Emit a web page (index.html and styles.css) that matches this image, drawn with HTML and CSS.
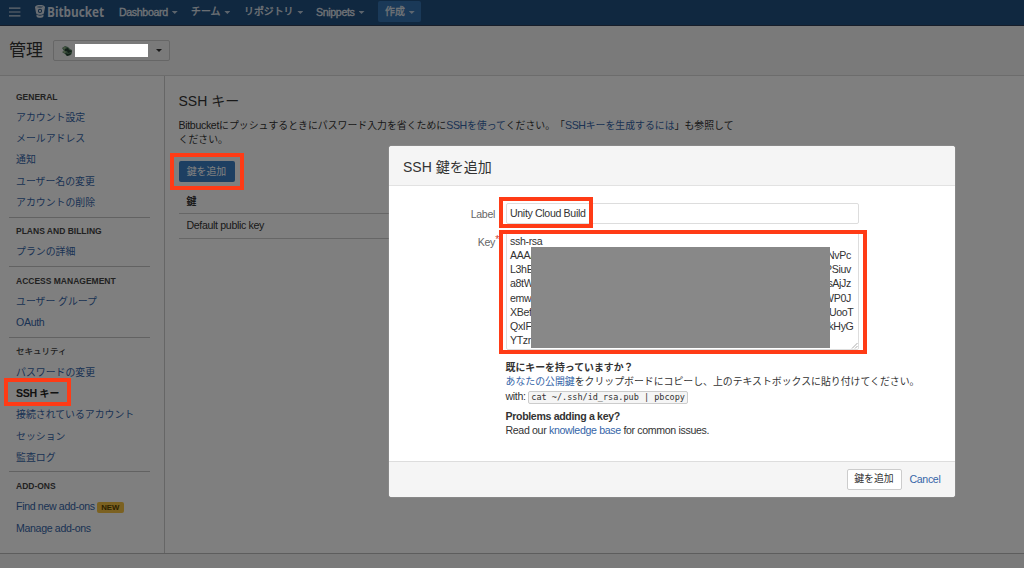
FILE: index.html
```html
<!DOCTYPE html>
<html lang="ja">
<head>
<meta charset="utf-8">
<title>SSH キー — Bitbucket</title>
<link rel="stylesheet" href="styles.css">
</head>
<body>
<div class="screen">
  <nav class="topbar">
    <svg class="menu-icon" viewBox="0 0 12 10"><path d="M0 1.2h11.4M0 5h11.4M0 8.8h11.4"/></svg>
    <svg class="logo" viewBox="0 0 76 22">
      <path class="logo-bucket" fill-rule="evenodd" d="M1 6.200C1 4.500 3.500 4 6 4s5 .5 5 2.200L9.900 12.200C9.300 13.300 7.800 13.800 6 13.800S2.700 13.300 2.100 12.200ZM2.600 6C3.300 6.600 8.700 6.600 9.400 6 8.700 5.300 3.300 5.300 2.600 6ZM6 7.800A2.100 2.100 0 1 0 6 12 2.100 2.100 0 1 0 6 7.800Z"/>
      <circle class="logo-bucket" cx="6" cy="9.900" r="1.100"/>
      <path class="logo-bucket" d="M2.300 13.500C4 15 8 15 9.700 13.500L9.300 15.700C8.300 17 3.700 17 2.700 15.700Z"/>
      <text x="13" y="16.300" textLength="57" lengthAdjust="spacingAndGlyphs">Bitbucket</text>
    </svg>
    <a class="nav-item nav-dashboard"><span class="latin">Dashboard</span><i class="caret"></i></a>
    <a class="nav-item nav-team">チーム<i class="caret"></i></a>
    <a class="nav-item nav-repo">リポジトリ<i class="caret"></i></a>
    <a class="nav-item nav-snippets"><span class="latin">Snippets</span><i class="caret"></i></a>
    <a class="nav-item nav-create">作成<i class="caret"></i></a>
  </nav>
  <header class="page-header">
    <h1>管理</h1>
    <div class="account">
      <svg class="avatar" viewBox="0 0 12 12"><path fill="#5f8969" d="M1 3 4 1l3 1 2 2 2 1v3l-1 2-4 1-2-2-3-2 2-1Z"/><path fill="#243f30" d="m4 4 3-1 1 2 3 1-1 1-3 1-1-2H4Zm0 4 3 1 3-1-1 2-3 1Z"/><path fill="#a4bd91" d="m2 3 2-1 1 1-2 1ZM3 6l2 1-1 1-2-1Z"/></svg>
      <span class="name-mask"></span>
      <i class="caret"></i>
    </div>
  </header>
  <div class="columns">
    <aside class="sidebar">
      <section><h2>GENERAL</h2><a>アカウント設定</a><a>メールアドレス</a><a>通知</a><a>ユーザー名の変更</a><a>アカウントの削除</a></section>
      <section><h2>PLANS AND BILLING</h2><a>プランの詳細</a></section>
      <section><h2>ACCESS MANAGEMENT</h2><a>ユーザー グループ</a><a class="latin">OAuth</a></section>
      <section><h2 class="heading-ja">セキュリティ</h2><a>パスワードの変更</a><a class="current"><span class="latin">SSH</span> キー</a><a>接続されているアカウント</a><a>セッション</a><a>監査ログ</a></section>
      <section><h2>ADD-ONS</h2><a><span class="latin">Find new add-ons</span><span class="badge">NEW</span></a><a class="latin">Manage add-ons</a></section>
    </aside>
    <main class="content">
      <h2 class="content-title">SSH キー</h2>
      <p class="intro"><span class="latin">Bitbucket</span>にプッシュするときにパスワード入力を省くために<a><span class="latin">SSH</span>を使って</a>ください。「<a><span class="latin">SSH</span>キーを生成するには</a>」も参照して<br>ください。</p>
      <button class="add-key">鍵を追加</button>
      <div class="key-table"><div class="key-head">鍵</div><div class="key-row latin">Default public key</div></div>
    </main>
  </div>
  <footer class="page-footer"></footer>
  <div class="blanket"></div>

  <div class="dialog">
    <div class="dialog-header">SSH 鍵を追加</div>
    <div class="dialog-body">
      <div class="field">
        <label class="latin">Label</label>
        <div class="input latin">Unity Cloud Build</div>
      </div>
      <div class="field">
        <label class="latin">Key<span class="required">*</span></label>
        <div class="textarea latin">
          <div class="line"><span>ssh-rsa</span></div>
          <div class="line"><span>AAAA</span><span>NvPc</span></div>
          <div class="line"><span>L3hE</span><span>PSiuv</span></div>
          <div class="line"><span>a8tW</span><span>sAjJz</span></div>
          <div class="line"><span>emw</span><span>WP0J</span></div>
          <div class="line wide"><span>XBef</span><span>UooT</span></div>
          <div class="line wide"><span>QxIF</span><span>kHyG</span></div>
          <div class="line"><span>YTzr</span></div>
          <div class="key-mask"></div>
          <svg class="grip" viewBox="0 0 7 7"><path d="M1 6.500 6.500 1M4 6.500 6.500 4"/></svg>
        </div>
      </div>
      <div class="help">
        <strong>既にキーを持っていますか？</strong>
        <p><a>あなたの公開鍵</a>をクリップボードにコピーし、上のテキストボックスに貼り付けてください。</p>
        <p class="command"><span class="latin">with:</span> <code>cat ~/.ssh/id_rsa.pub | pbcopy</code></p>
        <strong class="problems latin">Problems adding a key?</strong>
        <p class="latin">Read our <a>knowledge base</a> for common issues.</p>
      </div>
    </div>
    <div class="dialog-footer"><button class="submit">鍵を追加</button><a class="latin">Cancel</a></div>
  </div>

  <div class="mark mark-add"></div>
  <div class="mark mark-menu"></div>
  <div class="mark mark-label"></div>
  <div class="mark mark-key"></div>
</div>
</body>
</html>
```

FILE: styles.css
```css
* { box-sizing: border-box; }
body { margin: 0; }
h1, h2, p { margin: 0; font-weight: normal; }
button { font: inherit; padding: 0; }
.screen {
  position: relative;
  display: flex;
  flex-direction: column;
  width: 1024px;
  height: 568px;
  overflow: hidden;
  background: #fff;
  color: #333;
  font: 9.9px/14.1px "Liberation Sans", "Noto Sans CJK JP", sans-serif;
  text-spacing-trim: space-all;
  white-space: nowrap;
}
.latin { font-size: 10.600px; letter-spacing: -.34px; }
a { color: #3565a8; }

.caret { display: inline-block; flex: none; width: 6px; height: 3px; background: currentColor; clip-path: polygon(0 0, 100% 0, 50% 100%); }

.topbar { display: flex; align-items: center; height: 26px; flex: none; background: #205081; border-bottom: 1px solid #2e3d54; padding: 0 0 2px 9px; }
.menu-icon { width: 12px; height: 10px; fill: none; stroke: #ccd6e1; stroke-width: 1.2; }
.logo { width: 76px; height: 22px; margin-left: 13px; fill: #d5dde6; }
.logo text { font: bold 14px "Open Sans", sans-serif; }
.nav-item { display: flex; align-items: center; padding-top: 1px; color: #e0e6ed; -webkit-text-stroke: .3px #e0e6ed; }
.nav-item .caret { margin: 1px 0 0 4px; opacity: .8; }
.nav-dashboard { margin-left: 9px; width: 72px; }
.nav-team { width: 53px; }
.nav-repo { width: 72px; }
.nav-snippets { width: 62px; }
.nav-create { height: 21px; width: 43px; padding-left: 7px; background: #3572b0; border-radius: 2px; }

.page-header { display: flex; align-items: center; height: 50px; flex: none; padding: 0 0 0 9px; background: #f5f5f5; border-bottom: 1px solid #d8d8d8; }
.page-header h1 { width: 44px; font-size: 17px; line-height: 24px; }
.account { display: flex; align-items: center; width: 117px; height: 21px; padding-left: 7px; border: 1px solid #ccc; border-radius: 2px; }
.avatar { width: 12px; height: 12px; }
.name-mask { position: relative; z-index: 3; width: 73px; height: 13px; margin-left: 2px; background: #fff; }
.account .caret { margin-left: 8px; }

.columns { display: flex; height: 477px; flex: none; }
.sidebar { width: 165px; flex: none; padding: 10.500px 14px 0 9px; border-right: 1px solid #ccc; }
.sidebar section { padding: 0 7px 3.600px; border-bottom: 1px solid #c4c4c4; margin-bottom: 3.400px; }
.sidebar section:last-child { border: 0; }
.sidebar h2 { height: 20.500px; font-size: 8.500px; line-height: 21px; font-weight: bold; color: #444; }
.sidebar .heading-ja { font-weight: 500; }
.sidebar a { display: block; height: 21.200px; line-height: 21.400px; }
.sidebar .current { color: #222; font-weight: bold; }
.badge { display: inline-block; height: 11px; width: 27px; margin-left: 2px; border-radius: 2px; background: #f6c342; color: #594300; font-size: 7.800px; line-height: 11px; font-weight: bold; text-align: center; }

.content { flex: 1; padding: 15px 0 0 13.500px; }
.content-title { font-size: 14px; line-height: 20px; }
.intro { margin-top: 7px; }
.add-key { display: block; width: 56px; height: 21px; margin-top: 14px; border: 0; border-radius: 2px; background: #3b7fc4; color: #fff; }
.key-table { width: 400px; margin-top: 9px; }
.key-head, .key-row { height: 22.500px; padding: 4px 8px; border-bottom: 1px solid #ccc; font-weight: bold; }
.key-row { height: 25px; padding-top: 4.500px; font-weight: normal; }
.page-footer { flex: 1; background: #f5f5f5; border-top: 1px solid #bbb; }

.blanket { position: absolute; inset: 0; z-index: 2; background: rgba(0, 0, 0, .5); }

.dialog { position: absolute; z-index: 4; left: 388.500px; top: 146px; width: 566px; height: 351px; display: flex; flex-direction: column; overflow: hidden; border-radius: 3px; background: #fff; box-shadow: 0 0 1px #ddd; }
.dialog-header { height: 40px; flex: none; padding-left: 14.500px; border-bottom: 1.500px solid #e2e2e2; background: #f5f5f5; font-size: 14px; line-height: 42px; }
.dialog-body { flex: 1; padding-top: 17px; }
.field { display: flex; }
.field label { position: relative; width: 106.500px; margin-right: 10.500px; padding-top: 3.500px; text-align: right; color: #666; }
.required { position: absolute; right: -4px; top: 1px; color: #d04437; }
.input, .textarea { width: 353px; border: 1px solid #ddd; border-radius: 2px; padding-left: 3.500px; }
.input { height: 21px; margin-bottom: 7px; line-height: 19px; }
.textarea { position: relative; height: 119px; padding-top: 2.200px; }
.line { display: flex; justify-content: space-between; height: 14.100px; padding-right: 6.500px; }
.line.wide { padding-right: 4px; }
.key-mask { position: absolute; left: 24px; top: 15px; width: 299.500px; height: 101px; background: #888; }
.grip { position: absolute; right: 0; bottom: 0; width: 7px; height: 7px; fill: none; stroke: #888; stroke-width: .7; }
.help { padding: 11px 0 0 117px; }
.help strong { display: block; }
.command { line-height: 14px; }
.help .problems { margin-top: 5px; }
code { display: inline-block; height: 13px; padding: 0 2px; border: 1px solid #ccc; border-radius: 2px; background: #f5f5f5; font: 8.500px/11px "DejaVu Sans Mono", monospace; }
.dialog-footer { display: flex; align-items: center; height: 36px; flex: none; padding-left: 458px; border-top: 1px solid #ddd; background: #f5f5f5; }
.submit { width: 55px; height: 21px; margin-right: 8px; border: 1px solid #ccc; border-radius: 2px; background: #fff; color: #333; }

.mark { position: absolute; z-index: 5; border: 4px solid #ff3b16; }
.mark-add { left: 169.500px; top: 153px; width: 74px; height: 37px; }
.mark-menu { left: 4px; top: 378px; width: 67px; height: 28px; }
.mark-label { left: 499px; top: 197px; width: 94px; height: 30.500px; }
.mark-key { left: 499px; top: 229.500px; width: 368px; height: 124.500px; }
```
